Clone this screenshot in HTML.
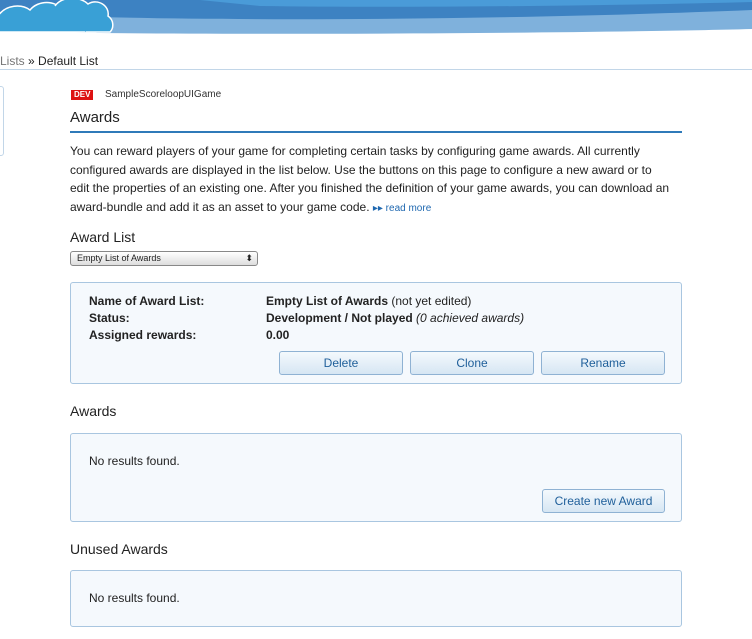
<!DOCTYPE html>
<html><head><style>
body{margin:0;width:752px;height:639px;overflow:hidden;background:#fff;font-family:"Liberation Sans",sans-serif;color:#222;position:relative}
.a{position:absolute}
.box{position:absolute;left:70px;width:612px;box-sizing:border-box;border:1px solid #a9c6e0;border-radius:3px;background:#f5f9fd}
.btn{position:absolute;height:24px;box-sizing:border-box;border:1px solid #8fb2d3;border-radius:3px;background:linear-gradient(#f4f9fd,#d6e6f3);color:#1f5f9a;font-size:12px;text-align:center;line-height:22px}
.lbl{font-size:12px;font-weight:bold}
h2{font-weight:normal;font-size:14px;margin:0}
</style></head><body>
<svg class="a" style="left:0;top:0" width="752" height="36">
<rect width="752" height="36" fill="#fff"/>
<path d="M0 0H752V29C600 33 300 35 100 33L0 31Z" fill="#7fb1dc"/>
<path d="M0 0H752V10C560 18 300 22 100 17L0 15Z" fill="#3d82c2"/>
<path d="M200 0H752V2C600 6 400 8 260 6Z" fill="#4a9bd8"/>
<path d="M-2 32V16C6 4 22 4 30 10C38 0 56 0 62 10C72 2 90 6 90 18C98 20 100 28 96 32Z" fill="#39a0d6" stroke="#fff" stroke-width="1.5"/>
<path d="M55 6C62 -4 80 -4 88 4C98 -2 110 6 108 16C114 20 114 28 110 32H86" fill="#39a0d6" stroke="#fff" stroke-width="1.5"/>
</svg>
<div class="a" style="left:0;top:54px;font-size:12px"><span style="color:#777">Lists</span> » Default List</div>
<div class="a" style="left:0;top:69px;width:752px;height:1px;background:#c2d6e8"></div>
<div class="a" style="left:-6px;top:86px;width:8px;height:68px;border:1px solid #c2d6e8;border-radius:3px"></div>
<div class="a" style="left:71px;top:90px;background:#d11;color:#fff;font-size:8px;font-weight:bold;padding:0 3px;line-height:10px">DEV</div>
<div class="a" style="left:105px;top:89px;font-size:10px;color:#333">SampleScoreloopUIGame</div>
<div class="a" style="left:70px;top:109px;font-size:15px">Awards</div>
<div class="a" style="left:70px;top:131px;width:612px;height:2px;background:#2f7ab9"></div>
<div class="a" style="left:70px;top:142px;width:612px;font-size:12px;line-height:18.5px">You can reward players of your game for completing certain tasks by configuring game awards. All currently<br>configured awards are displayed in the list below. Use the buttons on this page to configure a new award or to<br>edit the properties of an existing one. After you finished the definition of your game awards, you can download an<br>award-bundle and add it as an asset to your game code. <span style="color:#1f68b0;font-size:10px">▸▸ read more</span></div>
<h2 class="a" style="left:70px;top:229px">Award List</h2>
<div class="a" style="left:70px;top:251px;border:1px solid #888;border-radius:3px;background:linear-gradient(#fff,#ddd);font-size:9px;line-height:13px;padding-left:6px;box-sizing:border-box;width:188px;height:15px">Empty List of Awards<span style="position:absolute;right:4px;top:0">⬍</span></div>
<div class="box" style="top:282px;height:102px">
<div class="a lbl" style="left:18px;top:10px;line-height:17px">Name of Award List:<br>Status:<br>Assigned rewards:</div>
<div class="a" style="left:195px;top:10px;line-height:17px;font-size:12px"><b>Empty List of Awards</b> (not yet edited)<br><b>Development / Not played</b> <i>(0 achieved awards)</i><br><b>0.00</b></div>
<div class="btn" style="left:208px;top:68px;width:124px">Delete</div>
<div class="btn" style="left:339px;top:68px;width:124px">Clone</div>
<div class="btn" style="left:470px;top:68px;width:124px">Rename</div>
</div>
<h2 class="a" style="left:70px;top:403px">Awards</h2>
<div class="box" style="top:433px;height:89px">
<div class="a" style="left:18px;top:20px;font-size:12px">No results found.</div>
<div class="btn" style="left:471px;top:55px;width:123px">Create new Award</div>
</div>
<h2 class="a" style="left:70px;top:541px">Unused Awards</h2>
<div class="box" style="top:570px;height:57px">
<div class="a" style="left:18px;top:20px;font-size:12px">No results found.</div>
</div>
</body></html>
